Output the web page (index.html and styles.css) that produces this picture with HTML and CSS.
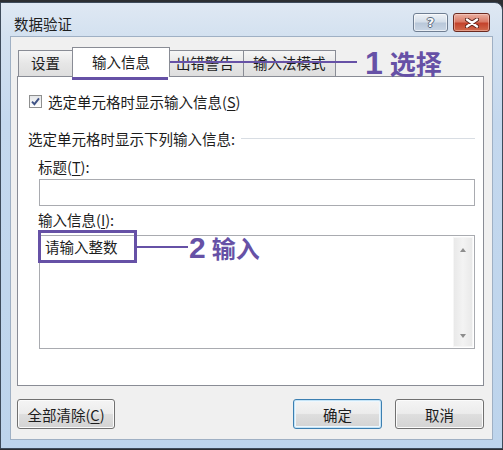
FILE: index.html
```html
<!DOCTYPE html>
<html lang="zh-CN">
<head>
<meta charset="utf-8">
<title>数据验证</title>
<link rel="stylesheet" href="styles.css">
</head>
<body>
<div class="window">
  <div class="titlebar">
    <span class="title">数据验证</span>
    <div class="caption-btns">
      <span class="cap-btn help"><span class="help-glyph">?</span></span>
      <span class="cap-btn close">
        <svg width="14" height="10" viewBox="0 0 14 10">
          <path d="M2 1.5 L12 8.5 M12 1.5 L2 8.5" stroke="#5b2219" stroke-width="4.2" stroke-linecap="round"/>
          <path d="M2 1.5 L12 8.5 M12 1.5 L2 8.5" stroke="#ffffff" stroke-width="2.4" stroke-linecap="round"/>
        </svg>
      </span>
    </div>
  </div>
  <div class="client">
    <div class="tabs">
      <div class="tab tab-first">设置</div>
      <div class="tab tab-active">输入信息</div>
      <div class="tab">出错警告</div>
      <div class="tab">输入法模式</div>
    </div>
    <div class="panel">
      <div class="check-row">
        <span class="checkbox">
          <svg width="11" height="11" viewBox="0 0 11 11">
            <path d="M2 5.6 L4.4 8.2 L9 2.3" fill="none" stroke="#3f5386" stroke-width="1.9"/>
          </svg>
        </span>
        <span>选定单元格时显示输入信息(<u>S</u>)</span>
      </div>
      <div class="group-head">
        <span>选定单元格时显示下列输入信息:</span>
        <span class="group-line"></span>
      </div>
      <div class="group">
        <div class="field-label">标题(<u>T</u>):</div>
        <div class="textbox"></div>
        <div class="field-label field-label-2">输入信息(<u>I</u>):</div>
        <div class="memo">
          <div class="memo-text">请输入整数</div>
          <div class="scrollbar">
            <span class="arrow arrow-up"></span>
            <span class="arrow arrow-down"></span>
          </div>
        </div>
      </div>
    </div>
    <div class="buttons">
      <button class="btn btn-clear">全部清除(<u>C</u>)</button>
      <button class="btn btn-ok">确定</button>
      <button class="btn btn-cancel">取消</button>
    </div>
  </div>
</div>

<div class="mark-box mark-box-1"></div>
<div class="mark-line mark-line-1"></div>
<div class="mark-label mark-label-1"><span class="mark-num">1</span><span>选择</span></div>

<div class="mark-box mark-box-2"></div>
<div class="mark-line mark-line-2"></div>
<div class="mark-label mark-label-2"><span class="mark-num">2</span><span>输入</span></div>
</body>
</html>
```

FILE: styles.css
```css
* { box-sizing: border-box; }

html, body {
  margin: 0;
  padding: 0;
}

body {
  width: 503px;
  height: 450px;
  overflow: hidden;
  background: #2c2e32;
  font-family: "Noto Sans CJK SC", "Noto Sans", sans-serif;
  font-size: 14.5px;
  color: #1c1c1c;
}

u { text-decoration: underline; text-underline-offset: 2px; }

.window {
  margin-top: 2px;
  height: 447px;
  border: 1px solid #3e4b5b;
  border-top-right-radius: 8px;
  background: linear-gradient(#dfe8f3 0px, #d3e1f0 34px, #c4d8ee 120px, #bdd4ec 100%);
  display: flex;
  flex-direction: column;
}

.titlebar {
  height: 33px;
  flex: none;
  display: flex;
  align-items: center;
  justify-content: space-between;
  padding: 6px 12px 0 13px;
}

.title {
  line-height: 20px;
  padding-top: 3px;
  color: #1e1e1e;
}

.caption-btns {
  display: flex;
  gap: 5px;
}

.cap-btn {
  height: 19px;
  border-radius: 3px;
  display: flex;
  align-items: center;
  justify-content: center;
}

.help {
  width: 35px;
  border: 1px solid #6f7e92;
  background: linear-gradient(#eef2f7 0%, #d5dfea 45%, #b9c8da 55%, #c9d6e5 100%);
  box-shadow: inset 0 0 0 1px rgba(255,255,255,0.6);
}

.help-glyph {
  font-family: "DejaVu Sans", sans-serif;
  font-weight: bold;
  font-size: 13px;
  line-height: 13px;
  color: #f7f9fb;
  text-shadow: 1px 0 0 #59687c, -1px 0 0 #59687c, 0 1px 0 #59687c, 0 -1px 0 #59687c;
}

.close {
  width: 37px;
  border: 1px solid #6b2a20;
  background: linear-gradient(#eab0a2 0%, #d97a66 45%, #c4432c 55%, #d06a4c 100%);
  box-shadow: inset 0 0 0 1px rgba(255,220,210,0.45);
}

.client {
  flex: 1;
  margin: 0 9px 8px;
  background: #f0f0f0;
  border: 1px solid #9fb0c4;
  padding: 10px 8px 0 6px;
  display: flex;
  flex-direction: column;
}

.tabs {
  height: 29px;
  flex: none;
  display: flex;
  align-items: flex-end;
  padding-left: 1px;
}

.tab {
  height: 26px;
  line-height: 24px;
  padding: 0 9px;
  border: 1px solid #898c95;
  border-bottom: none;
  background: linear-gradient(#f6f6f6, #e6e6e6 50%, #dedede);
  white-space: nowrap;
}

.tab + .tab { margin-left: -1px; }

.tab-first { padding: 0 12px; }

.tab-active {
  position: relative;
  z-index: 1;
  height: 30px;
  line-height: 28px;
  margin: 0 -2px -1px -3px;
  padding: 0 19px;
  background: #ffffff;
}

.tab-active + .tab { margin-left: -2px; }

.panel {
  height: 310px;
  flex: none;
  background: #ffffff;
  border: 1px solid #898c95;
  padding: 14px 8px 0 10px;
  display: flex;
  flex-direction: column;
}

.check-row {
  height: 20px;
  display: flex;
  align-items: center;
  margin-left: 1px;
}

.checkbox {
  width: 13px;
  height: 13px;
  margin-right: 6px;
  border: 1px solid #8e8f8f;
  background: linear-gradient(#e4e6e8, #ffffff);
  display: flex;
  align-items: center;
  justify-content: center;
}

.group-head {
  margin-top: 17px;
  height: 20px;
  display: flex;
  align-items: center;
}

.group-line {
  flex: 1;
  height: 1px;
  margin-left: 6px;
  background: #d8dde3;
}

.group {
  padding-left: 10px;
  display: flex;
  flex-direction: column;
}

.field-label {
  height: 20px;
  line-height: 20px;
  margin-top: 9px;
}

.field-label-2 { margin-top: 4px; }

.textbox {
  height: 27px;
  margin: 2px 0 0 1px;
  border: 1px solid #a9abb0;
  background: #ffffff;
}

.memo {
  height: 114px;
  margin: 5px 0 0 1px;
  border: 1px solid #a9abb0;
  background: #ffffff;
  display: flex;
}

.memo-text {
  flex: 1;
  padding: 1px 5px;
  line-height: 20px;
}

.scrollbar {
  width: 20px;
  margin: 1px 1px 1px 0;
  background: linear-gradient(90deg, #e9e9e9, #f3f3f3 50%, #e9e9e9);
  border: 1px solid #f6f6f6;
  display: flex;
  flex-direction: column;
  align-items: center;
  justify-content: space-between;
  padding: 10px 0 8px;
}

.arrow {
  width: 0;
  height: 0;
  border-left: 3.5px solid transparent;
  border-right: 3.5px solid transparent;
}

.arrow-up { border-bottom: 4px solid #8d8d8d; }
.arrow-down { border-top: 4px solid #8d8d8d; }

.buttons {
  margin-top: 13px;
  height: 30px;
  display: flex;
  gap: 13px;
}

.btn {
  height: 30px;
  width: 89px;
  font: inherit;
  color: #1c1c1c;
  border: 1px solid #707070;
  border-radius: 3px;
  background: linear-gradient(#f4f4f4 0%, #ececec 48%, #dedede 52%, #d3d3d3 100%);
  box-shadow: inset 0 0 0 1px #fbfbfb;
  padding: 0;
}

.btn-clear { width: 98px; }

.btn-ok {
  margin-left: auto;
  border-color: #3c7fb1;
  box-shadow: inset 0 0 0 1px #c4e3f6, inset 0 0 0 2px #eef7fd;
}

/* annotation overlays */
.mark-box {
  position: absolute;
  border: 3px solid #6651a6;
}

.mark-box-1 { left: 72px; top: 47px; width: 96px; height: 33px; }
.mark-box-2 { left: 38px; top: 230px; width: 99px; height: 33px; }

.mark-line {
  position: absolute;
  height: 2px;
  background: #6651a6;
}

.mark-line-1 { left: 168px; top: 61px; width: 189px; }
.mark-line-2 { left: 137px; top: 246px; width: 51px; }

.mark-label {
  position: absolute;
  display: flex;
  align-items: center;
  color: #6651a6;
  font-weight: bold;
  line-height: 30px;
  white-space: nowrap;
}

.mark-num {
  font-family: "Liberation Sans", sans-serif;
  font-weight: bold;
}

.mark-label-1 { left: 365px; top: 48px; font-size: 26px; gap: 7px; }
.mark-label-1 .mark-num { font-size: 32px; }

.mark-label-2 { left: 189px; top: 233px; font-size: 24px; gap: 6px; }
.mark-label-2 .mark-num { font-size: 30px; }
```
